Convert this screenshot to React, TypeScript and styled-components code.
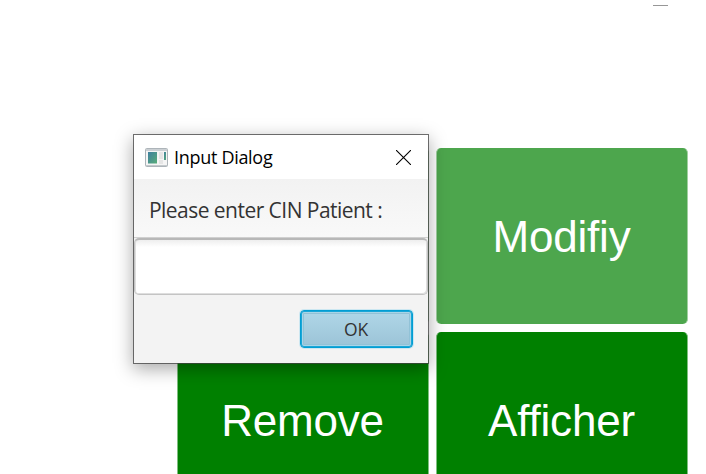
import React from "react";
import styled, { createGlobalStyle } from "styled-components";

const GlobalStyle = createGlobalStyle`
  * { box-sizing: border-box; }
  body { margin: 0; background: #fff; overflow: hidden; }
`;

const Desktop = styled.main`
  position: relative;
  width: 706px;
  height: 474px;
  overflow: hidden;
  background: #fff;
  font-family: "Liberation Sans", Arial, sans-serif;
`;

const WindowBar = styled.header`
  display: flex;
  justify-content: flex-end;
  height: 148px;
  padding: 5px 38px 0 0;
`;

const MinimizeMark = styled.span`
  width: 15px;
  height: 1px;
  background: #979797;
`;

const ActionGrid = styled.section`
  display: grid;
  grid-template-columns: 252px 252px;
  grid-auto-rows: 176px;
  gap: 8px 7px;
  padding-left: 177px;
`;

const ActionButton = styled.button<{ $hovered?: boolean }>`
  display: flex;
  align-items: center;
  justify-content: center;
  padding: 2px 1px 0 0;
  border: 0 solid ${(p) => (p.$hovered ? "#a0d0a0" : "#7fbf7f")};
  border-width: 0 1px;
  border-radius: 5px;
  background: ${(p) => (p.$hovered ? "#4da64d" : "#008000")};
  color: #fff;
  font: 44px/50px "Liberation Sans", Arial, sans-serif;
  font-variant-ligatures: none;
  letter-spacing: -0.2px;
`;

const Dialog = styled.div`
  position: absolute;
  left: 133px;
  top: 134px;
  display: flex;
  flex-direction: column;
  width: 296px;
  height: 230px;
  border: 1px solid rgba(65, 65, 65, 0.75);
  background: #f3f3f3;
  background-clip: padding-box;
  box-shadow: 0 5px 17px rgba(0, 0, 0, 0.34);
  font-family: "Open Sans", "Noto Sans", sans-serif;
`;

const TitleBar = styled.div`
  display: flex;
  align-items: center;
  height: 44px;
  padding: 0 17px 0 11px;
  background: #fff;
`;

const Title = styled.span`
  flex: 1;
  margin: 0 0 0 6px;
  color: #000;
  font-size: 18px;
  line-height: 24px;
  letter-spacing: -0.3px;
  white-space: nowrap;
`;

const Prompt = styled.label`
  height: 59px;
  padding: 17px 0 0 15px;
  border-bottom: 1px solid #d0d0d0;
  background: linear-gradient(#f2f2f2, #f9f9f9);
  color: #333;
  font-size: 21px;
  line-height: 28px;
  letter-spacing: -0.54px;
  white-space: nowrap;
`;

const Field = styled.input`
  width: 294px;
  height: 57px;
  padding: 0 10px;
  border: 1px solid #c4c4c4;
  border-top: 2px solid #b8b8b8;
  border-radius: 5px;
  outline: 0;
  background: linear-gradient(#eee, #fff 7px);
  box-shadow: inset 1px 0 #dedede, inset -1px -1px #dedede;
`;

const Footer = styled.div`
  display: flex;
  justify-content: flex-end;
  padding: 15px 15px 0 0;
`;

const OkButton = styled.button`
  width: 113px;
  height: 38px;
  padding: 0 1px 0 0;
  border: 1px solid #039ed3;
  border-radius: 4px;
  background: linear-gradient(#b0d7e8, #9bc3d6);
  box-shadow: 0 0 0 1px #cce7f1, inset 0 0 0 1px #1ba6d7, inset 0 0 0 2px #a9d5e7, inset 0 0 0 3px #91c2d7;
  color: #333;
  font: 17.5px/24px "Open Sans", "Noto Sans", sans-serif;
  letter-spacing: -0.2px;
`;

const AppIcon = () => (
  <svg width="23" height="19" viewBox="0 0 23 19" aria-hidden="true">
    <defs>
      <linearGradient id="pane" x1="0" y1="0" x2="1" y2="1">
        <stop stopColor="#3f7f9f" />
        <stop offset="1" stopColor="#58ad79" />
      </linearGradient>
    </defs>
    <rect x="0.5" y="0.5" width="22" height="18" rx="1" fill="#f5f5f5" stroke="#adb4b9" />
    <path d="M1 1.5h21M1 2.5h21" stroke="#cbd0d4" />
    <rect x="3" y="4" width="9" height="11.5" fill="url(#pane)" />
    <path d="M14 4h4v7h-4zM14 12h4v4h-4z" fill="#e5e5e5" />
    <rect x="19" y="4" width="2" height="8" fill="url(#pane)" />
    <path d="M1 17.5h21" stroke="#c4c9cc" />
  </svg>
);

const CloseIcon = () => (
  <svg width="15" height="15" viewBox="0 0 15 15" aria-label="Close">
    <path d="M0 0l15 15M15 0L0 15" stroke="#000" strokeWidth="1.1" />
  </svg>
);

export default function App() {
  return (
    <Desktop>
      <GlobalStyle />
      <WindowBar>
        <MinimizeMark />
      </WindowBar>
      <ActionGrid>
        <ActionButton $hovered />
        <ActionButton $hovered>Modifiy</ActionButton>
        <ActionButton>Remove</ActionButton>
        <ActionButton>Afficher</ActionButton>
      </ActionGrid>
      <Dialog role="dialog">
        <TitleBar>
          <AppIcon />
          <Title>Input Dialog</Title>
          <CloseIcon />
        </TitleBar>
        <Prompt htmlFor="cin">Please enter CIN Patient :</Prompt>
        <Field id="cin" />
        <Footer>
          <OkButton>OK</OkButton>
        </Footer>
      </Dialog>
    </Desktop>
  );
}
